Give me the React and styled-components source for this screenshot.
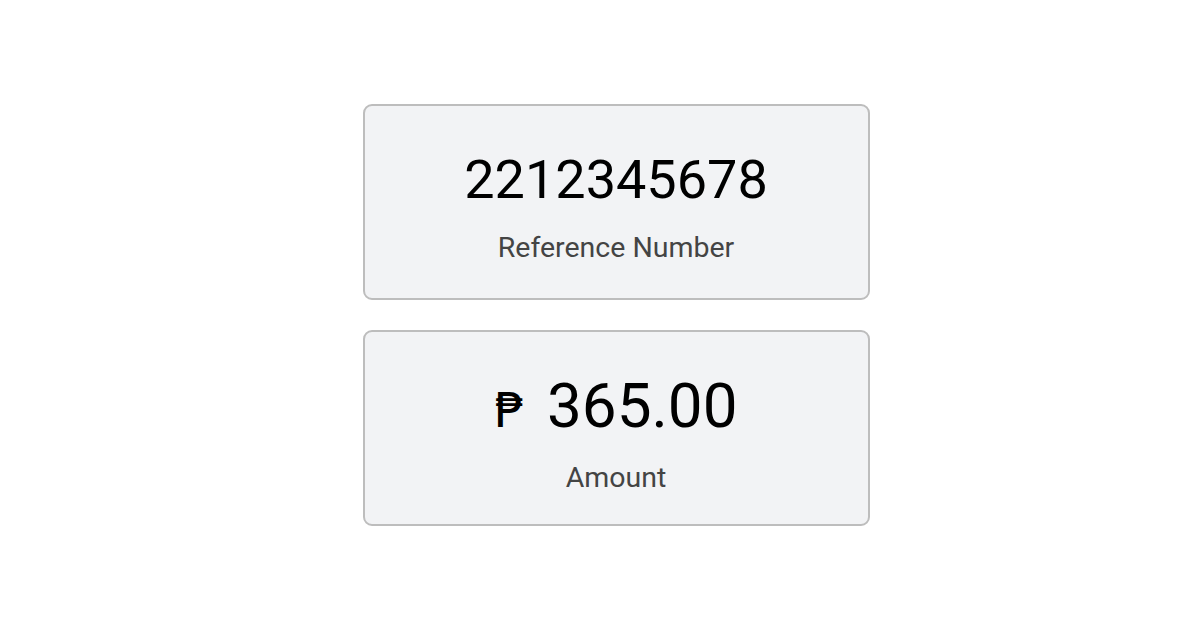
import React from 'react';
import styled, { createGlobalStyle } from 'styled-components';

const GlobalStyle = createGlobalStyle`
  html, body {
    margin: 0;
    padding: 0;
    background: #ffffff;
    font-family: Roboto, "Liberation Sans", sans-serif;
  }
`;

const Page = styled.div`
  min-height: 100vh;
  box-sizing: border-box;
  padding-left: 32px;
  display: flex;
  flex-direction: column;
  align-items: center;
  justify-content: center;
  gap: 30px;
`;

const Card = styled.div`
  width: 507px;
  height: 196px;
  box-sizing: border-box;
  padding-top: 12px;
  background: #f2f3f5;
  border: 2px solid #bdbdbd;
  border-radius: 9px;
  display: flex;
  flex-direction: column;
  align-items: center;
  justify-content: center;
  gap: 27px;
`;

const Value = styled.div`
  font-size: ${(p) => p.$size}px;
  line-height: 1;
  color: #000;
  display: flex;
  align-items: baseline;
  gap: 22px;
`;

const Currency = styled.span`
  font-family: "DejaVu Sans", sans-serif;
  font-size: 48px;
`;

const Label = styled.div`
  font-size: 28.5px;
  line-height: 1;
  color: #444;
`;

const InfoCard = ({ value, label, currency, size }) => (
  <Card>
    <Value $size={size}>
      {currency && <Currency>{currency}</Currency>}
      <span>{value}</span>
    </Value>
    <Label>{label}</Label>
  </Card>
);

export default function App() {
  return (
    <>
      <GlobalStyle />
      <Page>
        <InfoCard value="2212345678" label="Reference Number" size={54} />
        <InfoCard value="365.00" label="Amount" currency="₱" size={62} />
      </Page>
    </>
  );
}
